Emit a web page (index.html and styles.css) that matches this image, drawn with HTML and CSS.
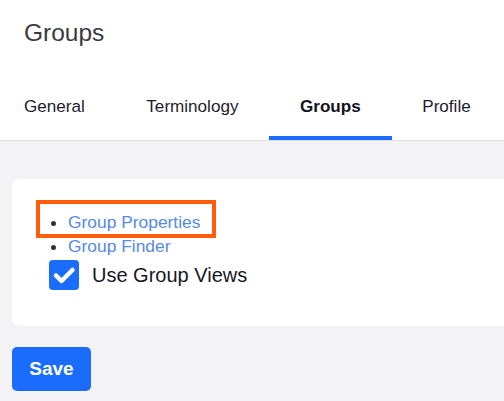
FILE: index.html
```html
<!DOCTYPE html>
<html lang="en">
<head>
<meta charset="utf-8">
<title>Groups</title>
<link rel="stylesheet" href="styles.css">
</head>
<body>
<header class="header">
  <h1 class="title">Groups</h1>
  <nav class="tabs">
    <a class="tab">General</a>
    <a class="tab">Terminology</a>
    <a class="tab active">Groups</a>
    <a class="tab">Profile</a>
  </nav>
</header>
<main class="main">
  <section class="card">
    <ul class="links">
      <li><a class="link">Group Properties</a></li>
      <li><a class="link">Group Finder</a></li>
    </ul>
    <label class="check-row">
      <svg class="checkbox" width="30" height="30" viewBox="0 0 30 30" aria-hidden="true">
        <rect x="0" y="0" width="30" height="30" rx="4" fill="#1a6cff"/>
        <polyline points="7,15.5 12.5,21 23.5,10" fill="none" stroke="#fff" stroke-width="4.5" stroke-linecap="round" stroke-linejoin="round"/>
      </svg>
      <span class="check-label">Use Group Views</span>
    </label>
    <div class="highlight"></div>
  </section>
  <button class="save">Save</button>
</main>
</body>
</html>
```
FILE: styles.css
```css
html, body {
  margin: 0;
  padding: 0;
  overflow: hidden;
}
body {
  font-family: "Liberation Sans", Arial, sans-serif;
  background: #f3f3f6;
  height: 401px;
}
.header {
  background: #fff;
  border-bottom: 1px solid #dedee2;
}
.title {
  margin: 0;
  padding: 19px 0 0 24px;
  font-size: 24.5px;
  line-height: 28px;
  font-weight: normal;
  color: #3a3a3f;
}
.tabs {
  display: flex;
  margin-top: 38px;
  padding-left: 24px;
}
.tab {
  padding: 12px 30.75px 19px;
  font-size: 17.1px;
  line-height: 20px;
  color: #1d1d2b;
  border-bottom: 4px solid transparent;
}
.tab:first-child {
  padding-left: 0;
}
.tab.active {
  font-weight: bold;
  border-bottom-color: #1a6cff;
  color: #14141f;
}
.main {
  padding: 38px 0 0 12px;
}
.card {
  position: relative;
  width: 520px;
  background: #fff;
  border-radius: 8px;
  padding: 16px;
}
.links {
  margin: 15px 0 0;
  padding-left: 40px;
  font-size: 17.4px;
  line-height: 24px;
  color: #333;
}
.link {
  color: #558ae6;
}
.check-row {
  display: flex;
  align-items: center;
  gap: 13px;
  margin: 2px 0 20px 21px;
  height: 30px;
}
.checkbox {
  display: block;
  flex: none;
}
.check-label {
  font-size: 20px;
  color: #17171f;
}
.highlight {
  position: absolute;
  left: 24px;
  top: 21px;
  width: 172px;
  height: 30px;
  border: 4px solid #fe5e0c;
}
.save {
  margin-top: 21px;
  width: 79px;
  height: 44px;
  border: 0;
  border-radius: 5px;
  background: #1a6cff;
  color: #fff;
  font-family: "Liberation Sans", Arial, sans-serif;
  font-weight: bold;
  font-size: 19px;
  padding: 0;
}
```
